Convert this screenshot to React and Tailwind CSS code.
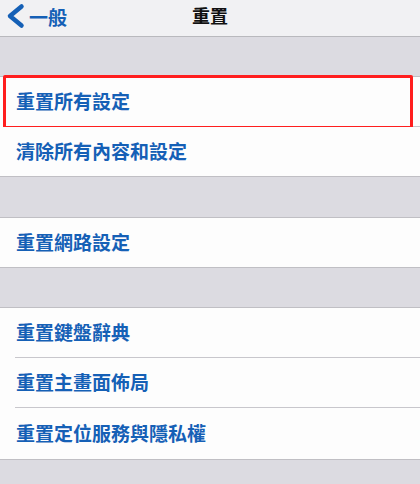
const groups = [
  { gap: "mt-[39px]", items: [["重置所有設定", "h-[50px]"], ["清除所有內容和設定", "h-[49px]"]], highlight: 0 },
  { gap: "mt-[40px]", items: [["重置網路設定", "h-[49px]"]] },
  { gap: "mt-[39px]", items: [["重置鍵盤辭典", "h-[50px]"], ["重置主畫面佈局", "h-[50px]"], ["重置定位服務與隱私權", "h-[51px]"]] },
];

function Row({ label, last, highlight, rowH }) {
  return (
    <div className={`relative bg-[#fdfdfd] ${rowH}`}>
      <div className={`flex h-full items-center ${last ? "pl-4" : "ml-[15px] pl-px border-b border-[#c8c7cc]"}`}>
        <span className="text-[19px] font-semibold text-[#1560b6]">{label}</span>
      </div>
      {/* Red highlight box drawn over the first row */}
      {highlight && (
        <div className="pointer-events-none absolute left-[3px] right-[7px] top-[-2px] bottom-[-2px] rounded-[2px] border-[3px] border-[#ff1e1e]" />
      )}
    </div>
  );
}

export default function App() {
  return (
    <div
      className="w-[420px] h-[484px] overflow-hidden bg-[#dcdbe1]"
      style={{ fontFamily: '"Noto Sans CJK TC", "Noto Sans", sans-serif' }}
    >
      {/* Nav bar */}
      <header className="h-[37px] border-b border-[#b9b9bd] bg-[#f1f1f3]">
        <div className="grid h-[28px] grid-cols-3 items-center">
          <div className="flex items-center gap-[3px] pl-[6px] pt-[3px] text-[#1560b6]">
            <svg width="20" height="26" viewBox="0 0 20 26" fill="none">
              <path d="M15.5 3.5 L4 13 L15.5 22.5" stroke="currentColor" strokeWidth="4.5" strokeLinecap="round" strokeLinejoin="round" />
            </svg>
            <span className="text-[19px] font-semibold leading-none">一般</span>
          </div>
          <div className="text-center text-[18px] font-bold leading-none text-[#111]">重置</div>
          <div />
        </div>
      </header>

      {groups.map((g, gi) => (
        <div key={gi} className={`${g.gap} border-y border-[#c0bfc4]`}>
          {g.items.map(([label, rowH], i) => (
            <Row
              key={label}
              label={label}
              rowH={rowH}
              last={i === g.items.length - 1}
              highlight={g.highlight === i}
            />
          ))}
        </div>
      ))}
    </div>
  );
}
